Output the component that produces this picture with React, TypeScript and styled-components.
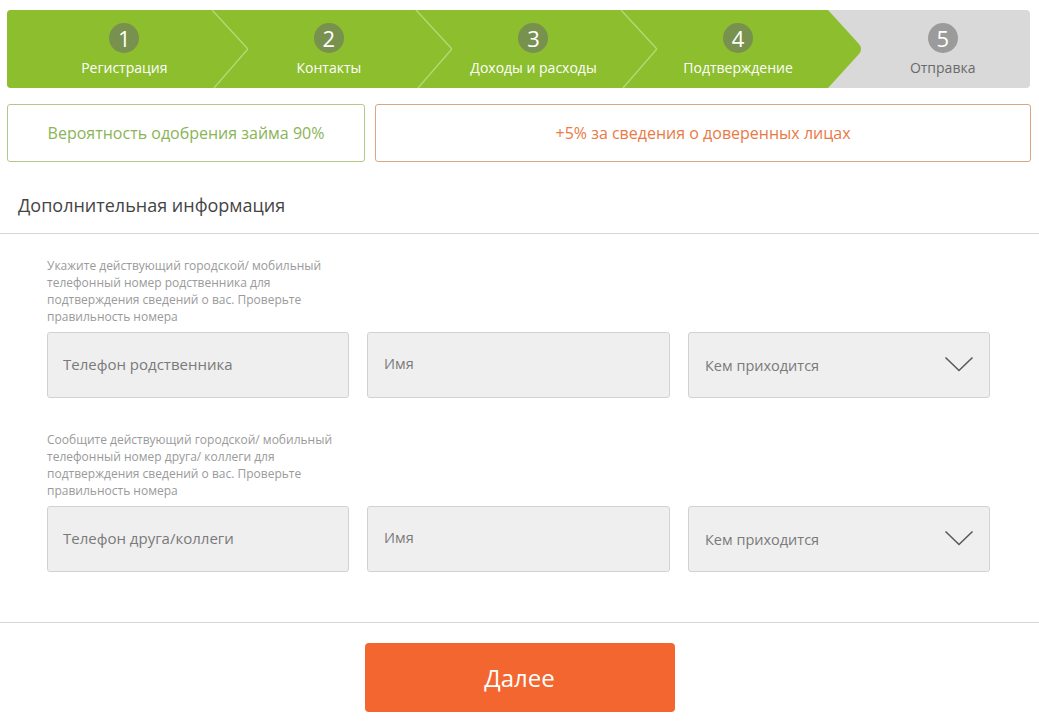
import React from 'react'
import styled, { createGlobalStyle } from 'styled-components'

const GlobalStyle = createGlobalStyle`
  html, body {
    margin: 0;
    padding: 0;
    background: #ffffff;
  }
  body {
    font-family: 'Open Sans', 'Liberation Sans', sans-serif;
    color: #444444;
  }
`

const Page = styled.div`
  width: 1039px;
  padding-top: 10px;
`

const StepsBar = styled.div`
  margin: 0 9px 0 7px;
  height: 78px;
  display: flex;
  background: #d9d9d9;
  border-radius: 4px;
  overflow: hidden;
`

const Step = styled.div<{ active: boolean }>`
  position: relative;
  flex: 1 1 0;
  display: flex;
  flex-direction: column;
  align-items: center;
  padding: 13px 0 0 30px;
  background: ${({ active }) => (active ? '#8cbe2e' : 'transparent')};
  color: ${({ active }) => (active ? '#ffffff' : '#6a6a6a')};
`

const StepNumber = styled.div<{ active: boolean }>`
  position: relative;
  z-index: 2;
  width: 30px;
  height: 30px;
  border-radius: 50%;
  background: ${({ active }) => (active ? '#78914f' : '#9b9b9b')};
  color: #ffffff;
  font-size: 22px;
  line-height: 30px;
  text-align: center;
`

const StepLabel = styled.div`
  position: relative;
  z-index: 2;
  margin-top: 5px;
  font-size: 14px;
  line-height: 20px;
`

const Divider = styled.svg`
  position: absolute;
  top: 0;
  right: -38px;
  z-index: 1;
`

const InfoRow = styled.div`
  display: flex;
  gap: 10px;
  margin: 16px 8px 0 7px;
`

const InfoBox = styled.div<{ tone: 'green' | 'orange'; width: number }>`
  width: ${({ width }) => width}px;
  height: 58px;
  box-sizing: border-box;
  display: flex;
  align-items: center;
  justify-content: center;
  border: 1px solid ${({ tone }) => (tone === 'green' ? '#b3c98a' : '#dba782')};
  border-radius: 3px;
  color: ${({ tone }) => (tone === 'green' ? '#8ab456' : '#e97a45')};
  font-size: 16px;
`

const SectionTitle = styled.h2`
  margin: 0;
  padding: 30px 0 14px 18px;
  font-weight: 400;
  font-size: 18px;
  line-height: 27px;
  color: #444444;
  border-bottom: 1px solid #d6d6d6;
`

const Form = styled.div`
  padding: 23px 0 50px 47px;
  border-bottom: 1px solid #d6d6d6;
  display: flex;
  flex-direction: column;
  gap: 33px;
`

const Group = styled.div`
  display: flex;
  flex-direction: column;
  gap: 7px;
`

const Hint = styled.p`
  margin: 0;
  width: 300px;
  font-size: 12px;
  line-height: 17px;
  color: #9a9a9a;
`

const FieldRow = styled.div`
  display: grid;
  grid-template-columns: 302px 303px 302px;
  gap: 18px;
`

const Field = styled.div<{ small?: boolean }>`
  height: 66px;
  box-sizing: border-box;
  display: flex;
  align-items: center;
  justify-content: space-between;
  padding: 0 15px 3px ${({ small }) => (small ? '16px' : '15px')};
  background: #efefef;
  border: 1px solid #d2d2d2;
  border-radius: 3px;
  font-size: ${({ small }) => (small ? '14.5px' : '15px')};
  color: #7a7a7a;
`

const SelectText = styled.span`
  padding-top: 4px;
`

const Footer = styled.div`
  display: flex;
  justify-content: center;
  padding: 20px 0 13px 0;
`

const NextButton = styled.button`
  width: 310px;
  height: 69px;
  border: none;
  border-radius: 4px;
  background: #f4662f;
  color: #ffffff;
  font-family: 'Open Sans', 'Liberation Sans', sans-serif;
  font-size: 24px;
  cursor: pointer;
`

const steps = ['Регистрация', 'Контакты', 'Доходы и расходы', 'Подтверждение', 'Отправка']
const current = 4

function StepDivider({ filled }: { filled: boolean }) {
  return filled ? (
    <Divider width="39" height="78" viewBox="0 0 39 78">
      <path d="M0 0 H4 L35 34 Q39 39 35 44 L4 78 H0 Z" fill="#8cbe2e" />
    </Divider>
  ) : (
    <Divider width="39" height="78" viewBox="0 0 39 78">
      <path d="M1 0 L36 38 Q37 39 36 40 L3 78" fill="none" stroke="#b3d975" strokeWidth="1.4" />
    </Divider>
  )
}

function ChevronDown() {
  return (
    <svg width="30" height="16" viewBox="0 0 30 16">
      <path d="M1.5 1.5 L15 14.5 L28.5 1.5" fill="none" stroke="#5a5a5a" strokeWidth="1.6" />
    </svg>
  )
}

const groups = [
  {
    hint: 'Укажите действующий городской/ мобильный телефонный номер родственника для подтверждения сведений о вас. Проверьте правильность номера',
    phone: 'Телефон родственника',
  },
  {
    hint: 'Сообщите действующий городской/ мобильный телефонный номер друга/ коллеги для подтверждения сведений о вас. Проверьте правильность номера',
    phone: 'Телефон друга/коллеги',
  },
]

export default function App() {
  return (
    <Page>
      <GlobalStyle />
      <StepsBar>
        {steps.map((label, i) => {
          const active = i < current
          return (
            <Step key={label} active={active}>
              <StepNumber active={active}>{i + 1}</StepNumber>
              <StepLabel>{label}</StepLabel>
              {active && <StepDivider filled={i === current - 1} />}
            </Step>
          )
        })}
      </StepsBar>

      <InfoRow>
        <InfoBox tone="green" width={358}>Вероятность одобрения займа 90%</InfoBox>
        <InfoBox tone="orange" width={656}>+5% за сведения о доверенных лицах</InfoBox>
      </InfoRow>

      <SectionTitle>Дополнительная информация</SectionTitle>

      <Form>
        {groups.map(group => (
          <Group key={group.phone}>
            <Hint>{group.hint}</Hint>
            <FieldRow>
              <Field>{group.phone}</Field>
              <Field small>Имя</Field>
              <Field small>
                <SelectText>Кем приходится</SelectText>
                <ChevronDown />
              </Field>
            </FieldRow>
          </Group>
        ))}
      </Form>

      <Footer>
        <NextButton>Далее</NextButton>
      </Footer>
    </Page>
  )
}
